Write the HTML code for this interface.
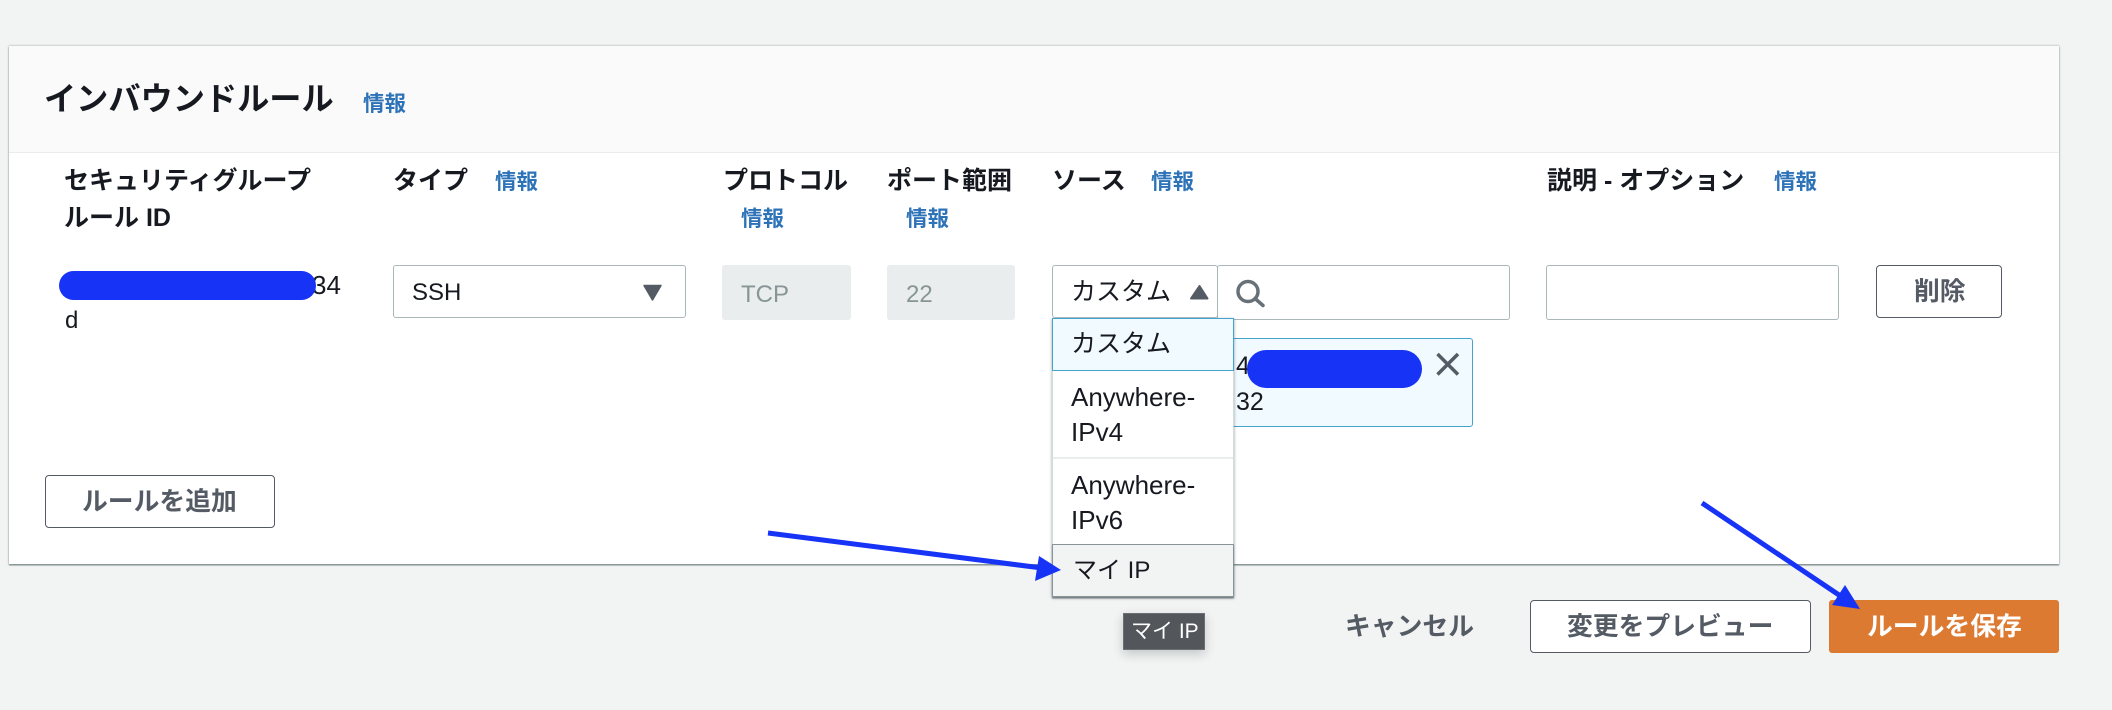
<!DOCTYPE html>
<html lang="ja">
<head>
<meta charset="utf-8">
<title>インバウンドルール</title>
<style>
html,body{margin:0;padding:0;width:2112px;height:710px;overflow:hidden;background:#f2f3f3}
body{position:relative;font-family:"Liberation Sans","Noto Sans CJK JP",sans-serif;color:#16191f}
.t{position:absolute;white-space:nowrap;line-height:40px;height:40px;font-size:24px}
.b{font-weight:700}
.h{font-size:25px;font-weight:700;color:#16191f}
.i{font-size:21.5px;font-weight:700;color:#2e73b8}
.box{position:absolute;box-sizing:border-box}
.inp{background:#fff;border:1.5px solid #aab7b8;border-radius:3px}
.btn{background:#fff;border:1.2px solid #545b64;border-radius:4px}
.g{color:#545b64;font-weight:700;font-size:25.8px}
.a{font-size:26px}
svg{position:absolute;left:0;top:0}
</style>
</head>
<body>
<div class="box" style="left:9px;top:46px;width:2050px;height:518px;background:#fff;box-shadow:0 1.5px 1px #879596,0 0 2px rgba(0,28,36,.4)"></div>
<div class="box" style="left:9px;top:46px;width:2050px;height:107px;background:#fafafa;border-bottom:1.5px solid #eaeded"></div>

<div class="t b" style="left:44px;top:79px;font-size:32.2px">インバウンドルール</div>
<div class="t i" style="left:363px;top:84px">情報</div>

<div class="t h" style="left:64px;top:161px">セキュリティグループ</div>
<div class="t h" style="left:64px;top:198px">ルール ID</div>
<div class="t h" style="left:393px;top:161px">タイプ</div>
<div class="t i" style="left:495px;top:162px">情報</div>
<div class="t h" style="left:723px;top:161px">プロトコル</div>
<div class="t i" style="left:741px;top:199px">情報</div>
<div class="t h" style="left:887px;top:161px">ポート範囲</div>
<div class="t i" style="left:906px;top:199px">情報</div>
<div class="t h" style="left:1052px;top:161px">ソース</div>
<div class="t i" style="left:1151px;top:162px">情報</div>
<div class="t h" style="left:1547px;top:161px">説明 - オプション</div>
<div class="t i" style="left:1774px;top:162px">情報</div>

<div class="t" style="left:312px;top:265px;font-size:26px">34</div>
<div class="box" style="left:59px;top:271px;width:257px;height:29px;background:#1733f5;border-radius:14.5px"></div>
<div class="t" style="left:65px;top:301px">d</div>

<div class="box inp" style="left:393px;top:265px;width:293px;height:53px"></div>
<div class="t" style="left:412px;top:273px">SSH</div>

<div class="box" style="left:722px;top:265px;width:129px;height:55px;background:#eaeded;border-radius:3px"></div>
<div class="t" style="left:741px;top:275px;color:#879596">TCP</div>
<div class="box" style="left:887px;top:265px;width:128px;height:55px;background:#eaeded;border-radius:3px"></div>
<div class="t" style="left:906px;top:275px;color:#879596">22</div>

<div class="box inp" style="left:1217px;top:265px;width:293px;height:55px"></div>
<div class="box inp" style="left:1052px;top:265px;width:166px;height:53px;z-index:1"></div>
<div class="t" style="left:1071px;top:272px;z-index:2;font-size:25px">カスタム</div>

<div class="box inp" style="left:1546px;top:265px;width:293px;height:55px"></div>
<div class="box btn" style="left:1876px;top:265px;width:126px;height:53px"></div>
<div class="t g" style="left:1914px;top:272px">削除</div>

<div class="box" style="left:1200px;top:338px;width:273px;height:89px;background:#f1faff;border:1.5px solid #44a3cf;border-radius:3px"></div>
<div class="t" style="left:1236px;top:346px;font-size:25px">4</div>
<div class="t" style="left:1236px;top:382px;font-size:25px">32</div>
<div class="box" style="left:1247px;top:350px;width:175px;height:38px;background:#1733f5;border-radius:19px"></div>

<!-- dropdown -->
<div class="box" style="left:1052px;top:318px;width:182px;height:279px;background:#fff;box-shadow:0 1px 3px rgba(0,28,36,.4);border-left:1px solid #d5dbdb;border-right:1px solid #d5dbdb"></div>
<div class="box" style="left:1052px;top:318px;width:182px;height:53px;background:#f1faff;border:1.5px solid #44a3cf"></div>
<div class="t" style="left:1071px;top:324px;font-size:25px">カスタム</div>
<div class="t a" style="left:1071px;top:377px">Anywhere-</div>
<div class="t a" style="left:1071px;top:412px">IPv4</div>
<div class="box" style="left:1053px;top:457px;width:180px;height:1.5px;background:#eaeded"></div>
<div class="t a" style="left:1071px;top:465px">Anywhere-</div>
<div class="t a" style="left:1071px;top:500px">IPv6</div>
<div class="box" style="left:1052px;top:544px;width:182px;height:53px;background:#f2f3f3;border:1.5px solid #879596;box-shadow:0 1.5px 1px rgba(84,91,100,.6)"></div>
<div class="t" style="left:1073px;top:551px">マイ IP</div>

<div class="box" style="left:1123px;top:613px;width:82px;height:37px;background:#53565a;border:1px solid #6b6f73;box-shadow:0 4px 10px rgba(0,28,36,.2)"></div>
<div class="t" style="left:1131px;top:612px;color:#fff;font-size:21px">マイ IP</div>

<div class="box btn" style="left:45px;top:475px;width:230px;height:53px"></div>
<div class="t g" style="left:82px;top:482px">ルールを追加</div>

<div class="t g" style="left:1345px;top:607px">キャンセル</div>
<div class="box btn" style="left:1530px;top:600px;width:281px;height:53px"></div>
<div class="t g" style="left:1567px;top:607px">変更をプレビュー</div>
<div class="box" style="left:1829px;top:600px;width:230px;height:53px;background:#dd7a32;border-radius:3px"></div>
<div class="t g" style="left:1867px;top:607px;color:#fff">ルールを保存</div>

<svg width="2112" height="710" viewBox="0 0 2112 710" style="z-index:5">
  <path d="M644 285.5H661L652.5 300Z" fill="#545b64" stroke="#545b64" stroke-width="1.5" stroke-linejoin="round"/>
  <path d="M1199.5 286L1207.5 298.5H1191Z" fill="#545b64" stroke="#545b64" stroke-width="2" stroke-linejoin="round"/>
  <circle cx="1248" cy="291.5" r="10" fill="none" stroke="#687078" stroke-width="3.5"/>
  <line x1="1255" y1="298.5" x2="1263" y2="305.5" stroke="#687078" stroke-width="3.5" stroke-linecap="round"/>
  <path d="M1437.5 354L1458 374.5M1458 354L1437.5 374.5" stroke="#545b64" stroke-width="3.5" fill="none"/>
  <line x1="768" y1="533" x2="1042" y2="568" stroke="#1733f5" stroke-width="5"/>
  <polygon points="1061,570 1039,556 1035,581" fill="#1733f5"/>
  <line x1="1702" y1="503" x2="1842" y2="597" stroke="#1733f5" stroke-width="5"/>
  <polygon points="1860,609 1845,585 1832,605" fill="#1733f5"/>
</svg>
</body>
</html>
